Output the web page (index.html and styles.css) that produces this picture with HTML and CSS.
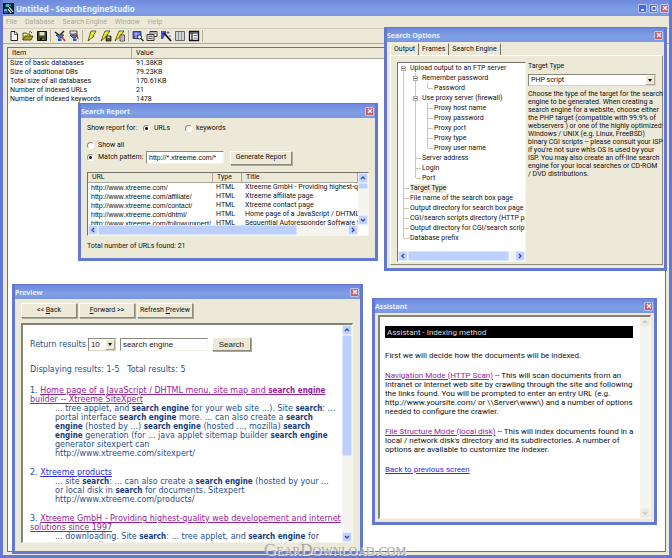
FILE: index.html
```
<!DOCTYPE html>
<html lang="en">
<head>
  <meta charset="UTF-8">
  <meta name="viewport" content="width=device-width, initial-scale=1.0">
  <title>Untitled - SearchEngineStudio</title>
  <link rel="stylesheet" href="styles.css">
</head>
<body>
  <svg class="defs" width="0" height="0">
    <symbol id="close" viewBox="0 0 8 8"><path d="M2 2l4 4M6 2l-4 4" stroke="#fff" stroke-width="1.3"/></symbol>
    <symbol id="up" viewBox="0 0 8 8"><path d="M2 5l2-2 2 2" fill="none" stroke="currentColor" stroke-width="1.3"/></symbol>
    <symbol id="down" viewBox="0 0 8 8"><path d="M2 3l2 2 2-2" fill="none" stroke="currentColor" stroke-width="1.3"/></symbol>
    <symbol id="left" viewBox="0 0 8 8"><path d="M5 2L3 4l2 2" fill="none" stroke="currentColor" stroke-width="1.3"/></symbol>
    <symbol id="right" viewBox="0 0 8 8"><path d="M3 2l2 2-2 2" fill="none" stroke="currentColor" stroke-width="1.3"/></symbol>
  </svg>

  <div class="app">
    <header class="titlebar main-title">
      <svg class="logo" width="11" height="11" viewBox="0 0 11 11"><rect width="11" height="11" fill="#122"/><path d="M3 1h3v3H3zM1 6h3v2H1z" fill="#4ab8d8"/><path d="M6 4l4 5M5 6l3 4" stroke="#fff" stroke-width="1.2"/><path d="M2 3l6-1" stroke="#3c6" stroke-width="1"/><path d="M1 9h4" stroke="#46f" stroke-width="1.5"/></svg>
      <h1>Untitled - SearchEngineStudio</h1>
      <button class="win-btn minimize" aria-label="Minimize"><svg width="8" height="8"><path d="M2 6h3" stroke="#fff" stroke-width="1.5"/></svg></button>
      <button class="win-btn" aria-label="Maximize"><svg width="8" height="8"><path d="M2 2.5h4v4H2z" fill="none" stroke="#fff"/></svg></button>
      <button class="win-btn close" aria-label="Close"><svg width="8" height="8"><use href="#close"/></svg></button>
    </header>

    <nav class="menu">
      <button>File</button>
      <button>Database</button>
      <button>Search Engine</button>
      <button>Window</button>
      <button>Help</button>
    </nav>

    <div class="toolbar">
      <button aria-label="New"><svg viewBox="0 0 12 12"><path d="M3 1.5h4l2.500 2.500v6.500H3z" fill="#fff" stroke="#222"/><path d="M6.500 1.500v3h3" fill="none" stroke="#222" stroke-width=".7"/></svg></button>
      <button aria-label="Open"><svg viewBox="0 0 12 12"><path d="M1 10V3h3l1 1h3v2" fill="#ee6" stroke="#331" stroke-width=".8"/><path d="M1 10l2-4h8L9 10z" fill="#a9a020" stroke="#331" stroke-width=".8"/><path d="M7 2q2-1 3 1" fill="none" stroke="#222" stroke-width=".8"/></svg></button>
      <button aria-label="Save"><svg viewBox="0 0 12 12"><path d="M1.500 1.500h9v9h-9z" fill="#4a4a14" stroke="#111"/><path d="M3.500 2h5v3.500h-5z" fill="#ddd"/><path d="M4 8h4v2.500H4z" fill="#111"/><path d="M6.500 8.500h1v1.500h-1z" fill="#eee"/></svg></button>
      <span class="sep"></span>
      <button aria-label="Build database"><svg viewBox="0 0 12 12"><path d="M1 2l4 3M10 1L6 5" stroke="#222" stroke-width="1.500"/><path d="M2 5h8L7 8H5z" fill="#48c" stroke="#124" stroke-width=".7"/><path d="M4 8.500h3.500v2.500H4z" fill="#35c"/><path d="M8 7l3 4" stroke="#c33" stroke-width="1.500"/></svg></button>
      <button aria-label="Update database"><svg viewBox="0 0 12 12"><path d="M2 1h7v3H2z" fill="#e9e9f4" stroke="#333" stroke-width=".8"/><path d="M2 5h8L7 8H5z" fill="#48c" stroke="#124" stroke-width=".7"/><path d="M5 8.500h3.500v2.500H5z" fill="#35c"/><path d="M8 3l2 6" stroke="#c33" stroke-width="1.200"/></svg></button>
      <span class="sep"></span>
      <button aria-label="Edit"><svg viewBox="0 0 12 12"><path d="M5 1h5L7 6h1L2 11l1.500-5z" fill="#ee2" stroke="#441" stroke-width=".8"/></svg></button>
      <button aria-label="Generate and save"><svg viewBox="0 0 12 12"><path d="M5 1h5L7 5h1L1 11l2-5z" fill="#ee2" stroke="#441" stroke-width=".8"/><path d="M6 6h5v5H6z" fill="#5a5a1c" stroke="#222" stroke-width=".8"/><path d="M7.500 6.500h2v1.500h-2z" fill="#eee"/></svg></button>
      <button aria-label="Generate report"><svg viewBox="0 0 12 12"><path d="M5 1h5L7 5h1L1 11l2-5z" fill="#ee2" stroke="#441" stroke-width=".8"/><path d="M6 5h4.500v6H6z" fill="#ddd" stroke="#333" stroke-width=".8"/><path d="M7 7h2.500M7 9h2.500" stroke="#555" stroke-width=".7"/></svg></button>
      <span class="sep"></span>
      <button aria-label="Search report"><svg viewBox="0 0 12 12"><path d="M1 1.500h8v7H1z" fill="#5560d0" stroke="#226" stroke-width=".8"/><path d="M2 4h6M4 2v6" stroke="#ccf" stroke-width=".8"/><circle cx="7.500" cy="7" r="2" fill="#cff" stroke="#222" stroke-width=".8"/><path d="M9 8.500l2.500 2.500" stroke="#222" stroke-width="1.200"/></svg></button>
      <button aria-label="Search options"><svg viewBox="0 0 12 12"><path d="M4 1.500h7v5H4z" fill="#fff" stroke="#222" stroke-width=".9"/><path d="M1 4.500h7v6H1z" fill="#ddd" stroke="#222" stroke-width=".9"/><path d="M2.500 6.500h4M2.500 8.500h4M5 3h5" stroke="#333" stroke-width=".8"/></svg></button>
      <button aria-label="Assistant"><svg viewBox="0 0 12 12"><path d="M1 1h5v2L3 9H1z" fill="#4850c8"/><path d="M4 3l7 8" stroke="#111" stroke-width="1.800"/><path d="M8 1v3M6.500 2.500h3M10 5v2" stroke="#448" stroke-width=".8"/></svg></button>
      <button aria-label="Columns"><svg viewBox="0 0 12 12"><path d="M1.500 1.500h9v9h-9z" fill="#cfd6cf" stroke="#667" /><path d="M4.500 2v8M7.500 2v8" stroke="#889" stroke-width=".8"/></svg></button>
      <button aria-label="Preview"><svg viewBox="0 0 12 12"><path d="M1.500 1.500h9v9h-9z" fill="#fff" stroke="#112" stroke-width="1.300"/><path d="M1.500 3h9M4 3v7" stroke="#112" stroke-width="1.200"/><path d="M5.500 5.500h4M5.500 8h4" stroke="#447" stroke-width=".8"/></svg></button>
      <span class="sep"></span>
    </div>

    <main class="workspace">
      <table class="stats">
        <thead>
          <tr><th class="stats-item">Item</th><th>Value</th></tr>
        </thead>
        <tbody>
          <tr><td>Size of basic databases</td><td>91.38KB</td></tr>
          <tr><td>Size of additional DBs</td><td>79.23KB</td></tr>
          <tr><td>Total size of all databases</td><td>170.61KB</td></tr>
          <tr><td>Number of indexed URLs</td><td>21</td></tr>
          <tr><td>Number of indexed keywords</td><td>1478</td></tr>
        </tbody>
      </table>
    </main>
  </div>

  <!-- Search Report -->
  <section class="window report">
    <header class="titlebar">
      <h2>Search Report</h2>
      <button class="win-btn close" aria-label="Close"><svg width="8" height="8"><use href="#close"/></svg></button>
    </header>
    <div class="report-body">
      <div class="report-row">
        <span class="report-label">Show report for:</span>
        <label class="radio report-urls"><input type="radio" name="kind" checked>URLs</label>
        <label class="radio"><input type="radio" name="kind">keywords</label>
      </div>
      <div class="report-row report-all">
        <label class="radio"><input type="radio" name="filter">Show all</label>
      </div>
      <div class="report-row report-match">
        <label class="radio report-pattern"><input type="radio" name="filter" checked>Match pattern:</label>
        <input class="field" type="text" value="http://*.xtreeme.com/*" aria-label="Pattern">
        <button class="btn">Generate Report</button>
      </div>
      <div class="url-list">
        <div class="url-top">
          <div class="url-view">
            <table class="urls">
              <thead>
                <tr><th class="col-url">URL</th><th class="col-type">Type</th><th>Title</th></tr>
              </thead>
              <tbody>
                <tr><td>http://www.xtreeme.com/</td><td>HTML</td><td>Xtreeme GmbH - Providing highest-qua</td></tr>
                <tr><td>http://www.xtreeme.com/affiliate/</td><td>HTML</td><td>Xtreeme affiliate page</td></tr>
                <tr><td>http://www.xtreeme.com/contact/</td><td>HTML</td><td>Xtreeme contact page</td></tr>
                <tr><td>http://www.xtreeme.com/dhtml/</td><td>HTML</td><td>Home page of a JavaScript / DHTML</td></tr>
                <tr><td>http://www.xtreeme.com/followupxpert/</td><td>HTML</td><td>Sequential Autoresponder Software fo</td></tr>
              </tbody>
            </table>
          </div>
          <div class="scroll vertical">
            <button aria-label="Scroll up"><svg width="8" height="8"><use href="#up"/></svg></button>
            <span class="thumb url-thumb-v"></span>
            <span class="track"></span>
            <button aria-label="Scroll down"><svg width="8" height="8"><use href="#down"/></svg></button>
          </div>
        </div>
        <div class="scroll horizontal url-hscroll">
          <button aria-label="Scroll left"><svg width="8" height="8"><use href="#left"/></svg></button>
          <span class="thumb url-thumb-h"></span>
          <span class="track"></span>
          <button aria-label="Scroll right"><svg width="8" height="8"><use href="#right"/></svg></button>
        </div>
      </div>
      <p class="total">Total number of URLs found: 21</p>
    </div>
  </section>

  <!-- Search Options -->
  <section class="window options">
    <header class="titlebar">
      <h2>Search Options</h2>
      <button class="win-btn close" aria-label="Close"><svg width="8" height="8"><use href="#close"/></svg></button>
    </header>
    <div class="options-body">
      <div class="tabs">
        <button class="tab active">Output</button>
        <button class="tab">Frames</button>
        <button class="tab">Search Engine</button>
      </div>
      <div class="panel">
        <div class="tree-box">
          <ul class="tree">
            <li><div class="node open">Upload output to an FTP server</div>
              <ul>
                <li><div class="node open">Remember password</div>
                  <ul>
                    <li><div class="node">Password</div></li>
                  </ul>
                </li>
                <li><div class="node open">Use proxy server (firewall)</div>
                  <ul>
                    <li><div class="node">Proxy host name</div></li>
                    <li><div class="node">Proxy password</div></li>
                    <li><div class="node">Proxy port</div></li>
                    <li><div class="node">Proxy type</div></li>
                    <li><div class="node">Proxy user name</div></li>
                  </ul>
                </li>
                <li><div class="node">Server address</div></li>
                <li><div class="node">Login</div></li>
                <li><div class="node">Port</div></li>
              </ul>
            </li>
            <li><div class="node"><span class="selected">Target Type</span></div></li>
            <li><div class="node">File name of the search box page</div></li>
            <li><div class="node">Output directory for search box page fil</div></li>
            <li><div class="node">CGI/search scripts directory (HTTP pat</div></li>
            <li><div class="node">Output directory for CGI/search scripts</div></li>
            <li><div class="node">Database prefix</div></li>
          </ul>
          <div class="scroll horizontal">
            <button aria-label="Scroll left"><svg width="8" height="8"><use href="#left"/></svg></button>
            <span class="thumb tree-thumb"></span>
            <span class="track"></span>
            <button aria-label="Scroll right"><svg width="8" height="8"><use href="#right"/></svg></button>
          </div>
        </div>
        <div class="target">
          <label for="target-type">Target Type</label>
          <div class="select">
            <select id="target-type"><option>PHP script</option></select>
          </div>
          <p>Choose the type of the target for the search<br>
            engine to be generated. When creating a<br>
            search engine for a website, choose either<br>
            the PHP target (compatible with 99.9% of<br>
            webservers ) or one of the highly optimized<br>
            Windows / UNIX (e.g. Linux, FreeBSD)<br>
            binary CGI scripts -- please consult your ISP<br>
            if you're not sure whis OS is used by your<br>
            ISP. You may also create an off-line search<br>
            engine for your local searches or CD-ROM<br>
            / DVD distributions.</p>
        </div>
      </div>
    </div>
  </section>

  <!-- Preview -->
  <section class="window preview">
    <header class="titlebar">
      <h2>Preview</h2>
      <button class="win-btn close" aria-label="Close"><svg width="8" height="8"><use href="#close"/></svg></button>
    </header>
    <div class="preview-body">
      <div class="preview-buttons">
        <button class="btn">&lt;&lt; <u>B</u>ack</button>
        <button class="btn"><u>F</u>orward &gt;&gt;</button>
        <button class="btn">Refresh <u>P</u>review</button>
      </div>
      <div class="frame">
        <div class="page results">
          <form class="search-form">
            <label for="count">Return results</label>
            <div class="select count"><select id="count"><option>10</option></select></div>
            <input class="field query" type="text" value="search engine" aria-label="Query">
            <button class="btn search-btn" type="button">Search</button>
          </form>
          <p class="summary">Displaying results: 1-5 &nbsp; Total results: 5</p>
          <div class="result">
            1. <a class="visited" href="#">Home page of a JavaScript / DHTML menu, site map and <b>search engine</b><br>builder -- Xtreeme SiteXpert</a>
            <p>... tree applet, and <b>search engine</b> for your web site ...). Site <b>search</b>: ...<br>
              portal interface <b>search engine</b> more. ... can also create a <b>search</b><br>
              <b>engine</b> (hosted by ...) <b>search engine</b> (hosted ..., mozilla) <b>search</b><br>
              <b>engine</b> generation (for ... java applet sitemap builder <b>search engine</b><br>
              generator sitexpert can<br>
              http://www.xtreeme.com/sitexpert/</p>
          </div>
          <div class="result">
            2. <a href="#">Xtreeme products</a>
            <p>... site <b>search</b>: ... can also create a <b>search engine</b> (hosted by your ...<br>
              or local disk in <b>search</b> for documents. Sitexpert<br>
              http://www.xtreeme.com/products/</p>
          </div>
          <div class="result">
            3. <a class="visited" href="#">Xtreeme GmbH - Providing highest-quality web developement and internet<br>solutions since 1997</a>
            <p>... downloading. Site <b>search</b>: ... tree applet, and <b>search engine</b> for<br>
              your web site</p>
          </div>
        </div>
        <div class="scroll vertical">
          <button aria-label="Scroll up"><svg width="8" height="8"><use href="#up"/></svg></button>
          <span class="thumb preview-thumb"></span>
          <span class="track"></span>
          <button aria-label="Scroll down"><svg width="8" height="8"><use href="#down"/></svg></button>
        </div>
      </div>
    </div>
  </section>

  <!-- Assistant -->
  <section class="window assistant">
    <header class="titlebar">
      <h2>Assistant</h2>
      <button class="win-btn close" aria-label="Close"><svg width="8" height="8"><use href="#close"/></svg></button>
    </header>
    <div class="frame">
      <div class="page guide">
        <h3>Assistant - Indexing method</h3>
        <p>First we will decide how the documents will be indexed.</p>
        <p><a class="visited" href="#">Navigation Mode (HTTP Scan)</a> -- This will scan documents from an<br>
          Intranet or Internet web site by crawling through the site and following<br>
          the links found. You will be prompted to enter an entry URL (e.g.<br>
          http://www.yoursite.com/ or \\Server\www\) and a number of options<br>
          needed to configure the crawler.</p>
        <p><a class="visited" href="#">File Structure Mode (local disk)</a> -- This will index documents found in a<br>
          local / network disk's directory and its subdirectories. A number of<br>
          options are available to customize the indexer.</p>
        <p><a href="#">Back to previous screen</a></p>
      </div>
      <div class="scroll vertical disabled">
        <button aria-label="Scroll up" disabled><svg width="8" height="8"><use href="#up"/></svg></button>
        <span class="track"></span>
        <button aria-label="Scroll down" disabled><svg width="8" height="8"><use href="#down"/></svg></button>
      </div>
    </div>
  </section>

  <div class="watermark">GearDownload.com</div>
</body>
</html>
```

FILE: styles.css
```
*, *::before, *::after {
  box-sizing: border-box;
}

body {
  margin: 0;
  height: 100vh;
  position: relative;
  overflow: hidden;
  background: #ece9d8;
  font: 7px/9px Roboto, "Liberation Sans", Arial, sans-serif;
  color: #111;
  white-space: nowrap;
}

h1, h2, h3, p, ul {
  margin: 0;
  padding: 0;
}

button, input, select {
  font: inherit;
  color: inherit;
  margin: 0;
  padding: 0;
  border: 0;
  border-radius: 0;
  background: none;
}

.defs {
  position: absolute;
}

/* Main window */
.app {
  height: 100%;
  display: flex;
  flex-direction: column;
  border: 3px solid #6478d2;
  border-top: 0;
}

.titlebar {
  display: flex;
  align-items: center;
  flex: none;
  gap: 2px;
  height: 14px;
  padding: 0 1px 0 0;
  background: linear-gradient(#6f88dc, #7f9fe6 60%, #7b97e2);
  color: #e6eefd;
}

.titlebar h1, .titlebar h2 {
  flex: 1;
  font: bold 7px/9px "Noto Sans", "Trebuchet MS", sans-serif;
}

.titlebar h1 {
  font-size: 8px;
}

.main-title {
  height: 16px;
  padding: 0;
  gap: 2px;
}

.win-btn {
  display: flex;
  align-items: center;
  justify-content: center;
  width: 9px;
  height: 9px;
  border: 1px solid #b9c8f2;
  border-radius: 1px;
  background: #4668d8;
}

.win-btn.close {
  background: #cf5a68;
}

.win-btn svg {
  flex: none;
}

.menu {
  display: flex;
  gap: 8px;
  height: 12px;
  padding: 0 3px;
  color: #aca899;
}

.toolbar {
  display: flex;
  align-items: center;
  align-self: stretch;
  height: 16px;
  padding: 0 4px;
  border-top: 1px solid #d3cfbd;
  border-bottom: 1px solid #aca899;
}

.toolbar button {
  width: 14px;
  height: 14px;
  padding: 1px;
}

.toolbar svg {
  display: block;
  width: 12px;
  height: 12px;
}

.sep {
  width: 1px;
  height: 12px;
  margin: 0 2px 0 1px;
  background: #b5b19f;
}

.workspace {
  flex: 1;
  margin: 3px 3px 3px 4px;
  border: 1px solid #76746a;
  background: #fff;
}

.stats, .urls {
  border-collapse: separate;
  border-spacing: 0;
}

.stats {
  width: 100%;
}

.stats th, .urls th {
  padding: 0 0 0 4px;
  background: #ece9d8;
  border-right: 1px solid #aca899;
  border-bottom: 1px solid #aca899;
  text-align: left;
  font-weight: normal;
}

.stats th {
  height: 11px;
}

.stats-item {
  width: 124px;
}

.stats td {
  padding: 0 0 0 2px;
}

.stats td + td {
  padding-left: 4px;
}

/* Floating windows */
.window {
  position: absolute;
  display: flex;
  flex-direction: column;
  border: 3px solid #6478d2;
  border-top-width: 1px;
  background: #ece9d8;
}

.btn {
  border: 1px solid #8d8a7c;
  border-top-color: #fff;
  border-left-color: #fff;
  box-shadow: 1px 1px 0 #aca899;
  background: #ece9d8;
}

.field {
  min-width: 0;
  padding: 0 2px;
  border: 1px solid #f4f2e8;
  border-top-color: #8d8a7c;
  border-left-color: #8d8a7c;
  background: #fff;
}

.select {
  position: relative;
  border: 1px solid #d8d4c4;
  border-top-color: #8d8a7c;
  border-left-color: #8d8a7c;
  background: #fff;
}

.select select {
  display: block;
  appearance: none;
  width: 100%;
  height: 100%;
  padding: 0 2px;
}

.select::before {
  content: "";
  position: absolute;
  top: 0;
  right: 0;
  bottom: 0;
  width: 10px;
  border: 1px solid #aca899;
  border-top-color: #fff;
  border-left-color: #fff;
  background: #ece9d8;
  pointer-events: none;
}

.select::after {
  content: "";
  position: absolute;
  top: 4px;
  right: 3px;
  border: 2px solid transparent;
  border-top: 3px solid #111;
  border-bottom: 0;
  pointer-events: none;
}

.frame {
  display: flex;
  flex: 1;
  min-height: 0;
  border: 1px solid #f8f6ec;
  border-top: 2px solid #85826f;
  border-left: 2px solid #85826f;
  background: #fff;
}

.page {
  flex: 1;
  min-width: 0;
  overflow: hidden;
}

a {
  color: #2a2ae0;
}

a.visited {
  color: #98209a;
}

/* Scrollbars */
.scroll {
  display: flex;
  flex: none;
  background: #f5f4f0;
  color: #34508c;
}

.scroll.vertical {
  flex-direction: column;
  width: 10px;
}

.scroll.horizontal {
  height: 10px;
}

.scroll button {
  flex: none;
  display: flex;
  align-items: center;
  justify-content: center;
  width: 10px;
  height: 10px;
  border: 1px solid #e4ecff;
  border-radius: 2px;
  background: #c0d2fb;
}

.scroll svg {
  flex: none;
}

.track {
  flex: 1;
}

.thumb {
  flex: none;
  border: 1px solid #d8e4ff;
  border-radius: 2px;
  background: #bdd0fb;
}

.scroll.disabled {
  color: #c4c2b8;
}

.scroll.disabled button {
  border-color: #f0eee6;
  background: #eeece2;
}

/* Search Report */
.report {
  left: 78px;
  top: 103px;
  width: 300px;
  height: 158px;
}

.report-body {
  padding: 6px 6px 0;
}

.report-row {
  display: flex;
  align-items: center;
  height: 9px;
}

.report-label {
  width: 56px;
}

.radio {
  display: flex;
  align-items: center;
  gap: 4px;
}

.radio input {
  flex: none;
  appearance: none;
  width: 7px;
  height: 7px;
  border: 1px solid #fff;
  border-top-color: #8d8a7c;
  border-left-color: #8d8a7c;
  border-radius: 50%;
  background: #fff;
}

.radio input:checked {
  background: radial-gradient(#111 1px, #fff 2px);
}

.report-urls {
  width: 42px;
}

.report-all {
  margin-top: 8px;
}

.report-row.report-match {
  height: 15px;
}

.report-pattern {
  width: 59px;
}

.report-match .field {
  width: 78px;
  height: 13px;
}

.report-match .btn {
  width: 62px;
  height: 14px;
  margin-left: 6px;
}

.url-list {
  height: 64px;
  margin-top: 7px;
  display: flex;
  flex-direction: column;
  border: 1px solid #f8f6ec;
  border-top-color: #76746a;
  border-left-color: #76746a;
  background: #fff;
}

.url-top {
  display: flex;
  flex: 1;
  min-height: 0;
}

.url-view {
  flex: 1;
  min-width: 0;
  overflow: hidden;
}

.urls {
  width: 100%;
  table-layout: fixed;
}

.urls th {
  height: 10px;
}

.urls td {
  padding: 0 0 0 3px;
  overflow: hidden;
}

.urls td:first-child, .report-match .field {
  font: 7px/9px "Liberation Sans", Arial, sans-serif;
}

.col-url {
  width: 125px;
}

.col-type {
  width: 29px;
}

.url-thumb-v {
  height: 6px;
}

.url-hscroll {
  margin-right: 10px;
}

.url-thumb-h {
  width: 199px;
}

.total {
  margin-top: 6px;
}

/* Search Options */
.options {
  left: 384px;
  top: 27px;
  width: 283px;
  height: 244px;
}

.options-body {
  flex: 1;
  min-height: 0;
  display: flex;
  flex-direction: column;
  padding: 1px 1px 3px 3px;
}

.tabs {
  display: flex;
}

.tab {
  height: 12px;
  padding: 0 3px;
  border-top: 1px solid #f8f6ec;
  border-right: 1px solid #76746a;
}

.tab.active {
  border-left: 1px solid #f8f6ec;
}

.panel {
  flex: 1;
  min-height: 0;
  display: flex;
  gap: 2px;
  padding: 6px 0 2px 6px;
  border: 1px solid #8d8a7c;
  border-top-color: #fff;
  border-left-color: #fff;
}

.tree-box {
  width: 129px;
  flex: none;
  display: flex;
  flex-direction: column;
  overflow: hidden;
  border: 1px solid #f8f6ec;
  border-top-color: #76746a;
  border-left-color: #76746a;
  background: #fff;
}

.tree {
  flex: 1;
  margin-left: 3px;
  background: linear-gradient(#c9c7bd, #c9c7bd) 2px 5px / 1px 170px no-repeat;
}

.tree, .tree ul {
  list-style: none;
}

.tree ul {
  margin-left: 12px;
  background: linear-gradient(#c9c7bd, #c9c7bd) 2px 0 / 1px calc(100% - 5px) no-repeat;
}

.node {
  display: flex;
  align-items: center;
  height: 10px;
}

.node::before {
  content: "";
  flex: none;
  width: 5px;
  height: 1px;
  margin: 0 1px 0 3px;
  background: #c9c7bd;
}

.node.open::before {
  height: 5px;
  margin: 0 4px 0 0;
  border: 1px solid #b0aea4;
  background: linear-gradient(#fff 1px, #666 1px, #666 2px, #fff 2px);
}

.selected {
  background: #ece9d8;
}

.tree-thumb {
  width: 101px;
}

.target {
  flex: 1;
  min-width: 0;
  line-height: 8px;
}

.target label {
  display: block;
}

.target .select {
  height: 12px;
  margin: 4px 6px 4px 0;
}

/* Preview */
.preview {
  left: 12px;
  top: 284px;
  width: 351px;
  height: 270px;
}

.preview-body {
  flex: 1;
  min-height: 0;
  display: flex;
  flex-direction: column;
  padding: 4px 7px 8px 6px;
}

.preview-buttons {
  display: flex;
  gap: 2px;
  margin-bottom: 5px;
}

.preview-buttons .btn {
  width: 56px;
  height: 15px;
}

.results {
  padding: 12px 0 0 7px;
  font: 8px/9px "DejaVu Sans", Verdana, sans-serif;
  color: #27508c;
}

.results b {
  font-family: "DejaVu Sans Condensed", Verdana, sans-serif;
}

.search-form {
  display: flex;
  align-items: center;
}

.count, .query, .search-btn {
  color: #222;
  font-family: "Liberation Sans", Arial, sans-serif;
}

.count {
  width: 28px;
  height: 13px;
  margin: 0 4px 0 2px;
}

.query {
  width: 88px;
  height: 13px;
}

.search-btn {
  width: 39px;
  height: 14px;
  margin-left: 4px;
}

.summary {
  margin: 14px 0 12px;
}

.result {
  margin-bottom: 10px;
}

.result p {
  margin-left: 25px;
}

.result p b {
  color: #163c78;
}

.preview-thumb {
  height: 121px;
}

/* Assistant */
.assistant {
  left: 372px;
  top: 298px;
  width: 285px;
  height: 227px;
}

.assistant .frame {
  margin: 2px 3px 3px;
}

.guide {
  padding: 9px 7px 0 5px;
  font-size: 8px;
}

.guide h3 {
  padding: 2px 2px 1px;
  margin-bottom: 13px;
  background: #000;
  color: #ddd;
  font: inherit;
}

.guide p {
  margin-bottom: 11px;
}

.watermark {
  position: absolute;
  left: 264px;
  bottom: 1px;
  font: small-caps 17px/14px "Liberation Serif", "Times New Roman", serif;
  color: #a9a9a9;
  text-shadow: 1px 1px 0 #e8e8e8;
}
```
